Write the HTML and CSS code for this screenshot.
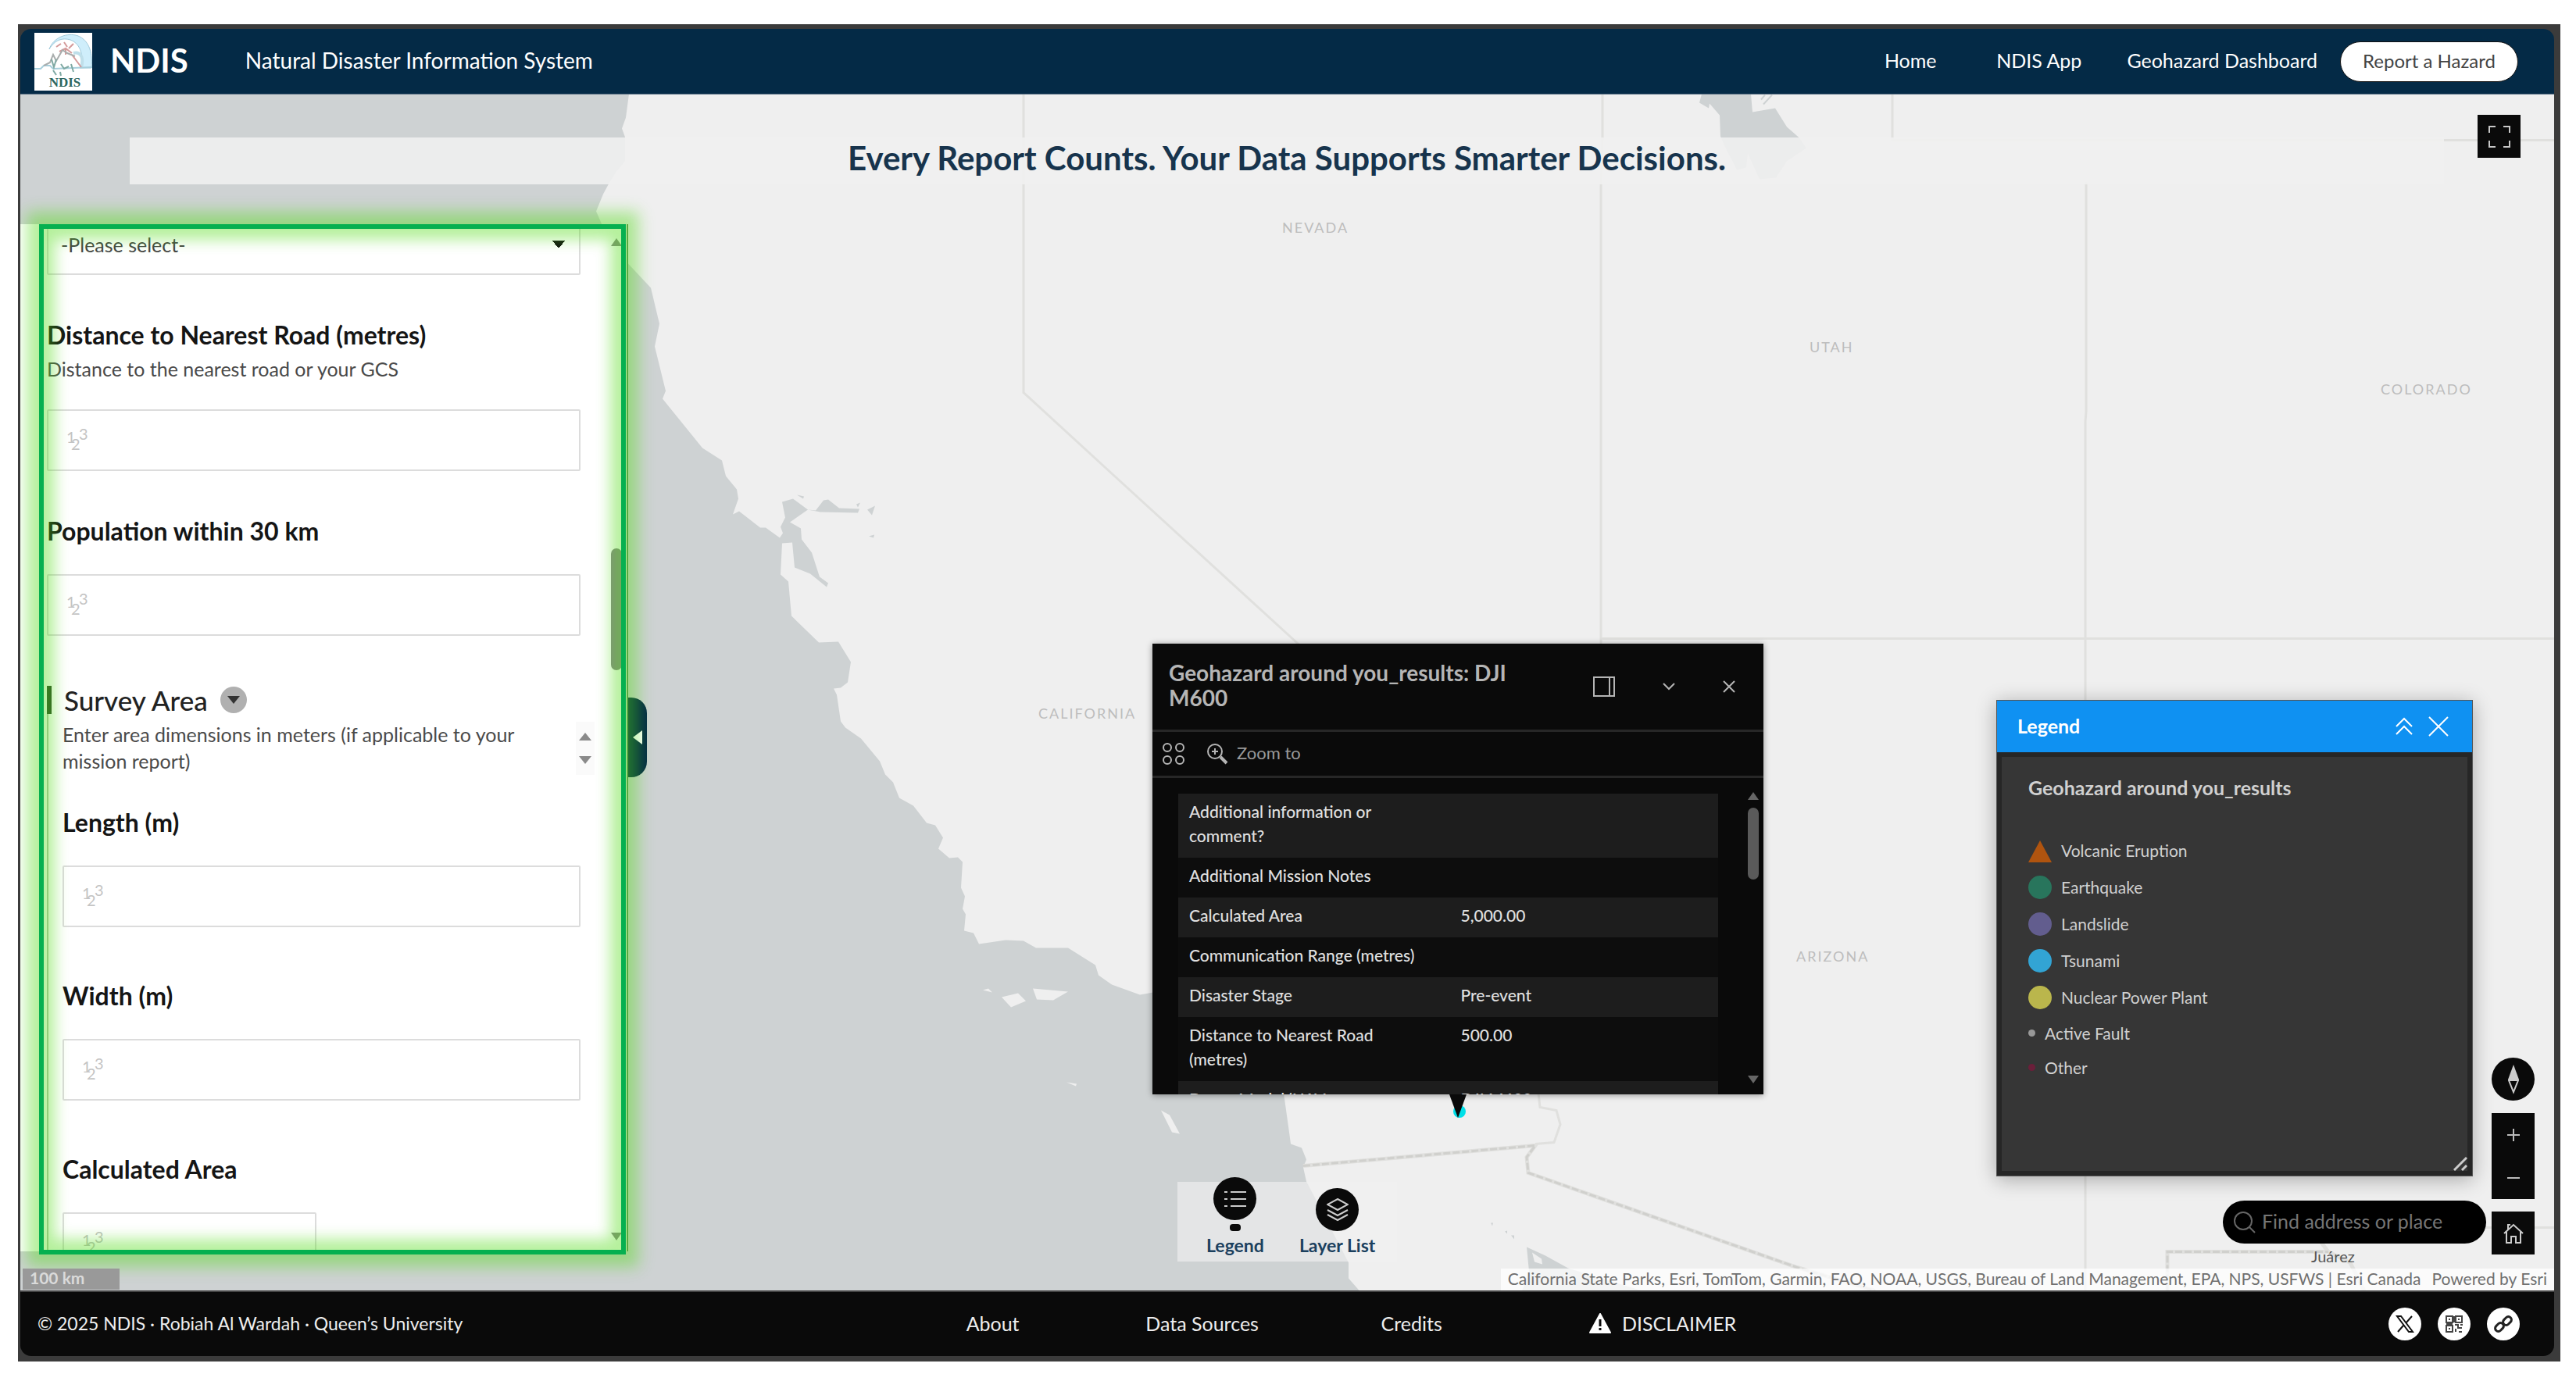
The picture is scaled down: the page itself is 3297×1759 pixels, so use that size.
FILE: index.html
```
<!DOCTYPE html>
<html lang="en">
<head>
    <meta charset="UTF-8">
    <meta name="viewport" content="width=device-width, initial-scale=1.0">
    <title>NDIS - Natural Disaster Information System</title>
    <link rel="stylesheet" href="styles.css">
</head>
<body>
    <div class="app">
        <header class="header">
            <svg class="logo" viewBox="0 0 74 74" aria-label="NDIS logo">
                <rect width="74" height="74" fill="#fff"/>
                <path d="M19 21 C24 6 42 -1 56 4 C68 9 75 22 73 45 L58 45 C64 32 60 14 46 9 C36 6 26 9 19 21Z" fill="#cfeefb" stroke="#9fc9da"/>
                <path d="M50 26 C58 24 64 30 60 44" fill="none" stroke="#bfdfea" stroke-width="4"/>
                <path d="M0 46 L8 46 L12 42 L20 42 L24 46 L74 44" fill="none" stroke="#a7cfdc" stroke-width="2"/>
                <path d="M28 18 L34 14 M38 12 L42 18 M50 14 L44 20 M32 24 L40 20 L48 26 M40 20 L40 28 M48 28 L60 44" fill="none" stroke="#d49a9a" stroke-width="2"/>
                <path d="M12 42 L20 38 L24 28 L28 36 L36 22 L42 26 L52 30" fill="none" stroke="#a9adad" stroke-width="2"/>
                <path d="M22 34 L25 44 L28 34 M24 48 L28 54 M34 40 L38 46 L44 43 M33 50 L34 55 M47 40 L50 50" fill="none" stroke="#7fa9a3" stroke-width="2"/>
                <text x="39" y="69" class="logo-text" text-anchor="middle">NDIS</text>
            </svg>
            <h1 class="brand">NDIS</h1>
            <p class="tagline">Natural Disaster Information System</p>
            <nav class="nav">
                <a href="#">Home</a>
                <a href="#">NDIS App</a>
                <a href="#">Geohazard Dashboard</a>
            </nav>
            <button class="report">Report a Hazard</button>
        </header>

        <main class="map">
            <svg class="basemap" viewBox="26 121 3243 1532" preserveAspectRatio="xMidYMid slice" aria-hidden="true">
                <rect x="26" y="121" width="3243" height="1532" fill="#efefef"/>
                <!-- ocean -->
                <path fill="#ced2d3" d="M26 121 L805 121 L801 151 L796 165 L800 176 L800 207 L789 220 L779 236 L772 249 L763 271 L770 287 L803 337 L833 369 L844 415 L838 444 L852 501 L848 511 L899 574 L924 590 L929 610 L943 627 L945 639 L938 659 L946 655 L973 676 L980 676 L998 689 L1002 683 L999 675 L1005 663 L1001 643 L1015 639 L1034 653 L1011 669 L1025 677 L1026 691 L1039 708 L1049 739 L1060 747 L1058 752 L1037 735 L1017 727 L1014 695 L1001 696 L999 736 L1009 745 L1013 789 L1048 823 L1073 822 L1089 848 L1085 874 L1076 881 L1067 882 L1071 890 L1076 924 L1082 932 L1102 946 L1126 975 L1133 992 L1143 1002 L1151 1022 L1169 1032 L1186 1054 L1197 1057 L1207 1073 L1201 1087 L1215 1099 L1226 1098 L1232 1104 L1230 1137 L1235 1148 L1232 1164 L1236 1171 L1234 1192 L1246 1195 L1253 1209 L1287 1204 L1310 1205 L1326 1214 L1367 1214 L1402 1236 L1406 1249 L1423 1261 L1459 1274 L1476 1271 L1560 1300 L1643 1400 L1650 1450 L1652 1465 L1666 1470 L1672 1485 L1668 1495 L1672 1513 L1682 1532 L1726 1617 L1726 1637 L1740 1653 L26 1653Z"/>
                <path fill="#ced2d3" d="M1034 653 L1044 654 L1054 641 L1060 640 L1074 651 L1100 652 L1098 657 L1050 656Z M1020 634 L1029 636 L1028 639Z M1110 653 L1120 648 L1116 660Z M1112 687 L1119 685 L1118 689Z M1096 646 L1101 644 L1098 650Z M1908 1566 L1911 1566 L1910 1570Z M1926 1577 L1929 1576 L1929 1580Z M1934 1582 L1938 1582 L1938 1587Z"/>
                <!-- gulf and lakes -->
                <path fill="#ced2d3" d="M1954 1597 L1978 1608 L2007 1624 L2102 1653 L1948 1653 L1957 1628Z"/>
                <path fill="#efefef" d="M1961 1604 L1973 1612 L1974 1619 L1964 1616Z"/>
                <path fill="#ced2d3" d="M2178 121 L2175 132 L2187 139 L2188 133 L2201 148 L2202 175 L2207 187 L2223 218 L2235 215 L2237 197 L2252 230 L2273 228 L2287 207 L2312 190 L2303 177 L2287 163 L2272 139 L2243 144 L2241 121Z"/>
                <path fill="none" stroke="#ced2d3" stroke-width="2" d="M2254 128 L2259 122 M2257 134 L2268 122"/>
                <!-- channel islands -->
                <path fill="#efefef" d="M1282 1277 L1303 1272 L1313 1282 L1294 1290Z M1322 1266 L1367 1270 L1348 1281 L1327 1280Z M1258 1268 L1265 1266 L1270 1271Z M1365 1386 L1378 1388 L1377 1391Z M1486 1422 L1497 1428 L1510 1452 L1500 1450Z"/>
                <g fill="none" stroke="#e0e0de" stroke-width="3">
                    <path d="M1310 121 V503 L1420 604 L1700 860"/>
                    <path d="M2051 121 V180 L2049 240 V830"/>
                    <path d="M2422 121 V180 H3269"/>
                    <path d="M2670 234 V528 L2669 540 V1653"/>
                    <path d="M2049 818 H3269"/>
                    <path d="M1969 1400 L1971 1418 L1992 1422 L1997 1440 L1989 1463 L1965 1465"/>
                    <path d="M2960 1572 H3269"/>
                </g>
                <g fill="none" stroke="#e0e0de" stroke-width="5">
                    <path d="M1668 1493 L1965 1467 L1954 1482 L1956 1502 L2300 1623 L2400 1653"/>
                    <path d="M2774 1653 V1603 H2980 L2970 1590"/>
                    <path d="M2980 1603 L3008 1617 L3026 1653"/>
                </g>
                <g fill="none" stroke="#d0d0cd" stroke-width="3" stroke-dasharray="9 3">
                    <path d="M1668 1493 L1965 1467 L1954 1482 L1956 1502 L2300 1623 L2400 1653"/>
                    <path d="M2774 1653 V1603 H2980"/>
                </g>
                <g class="state">
                    <text x="1641" y="298">NEVADA</text>
                    <text x="2316" y="451">UTAH</text>
                    <text x="3047" y="505">COLORADO</text>
                    <text x="1329" y="920">CALIFORNIA</text>
                    <text x="2299" y="1231">ARIZONA</text>
                </g>
                <text class="city" x="2958" y="1616">Juárez</text>
            </svg>

            <div class="banner"><h2>Every Report Counts. Your Data Supports Smarter Decisions.</h2></div>

            <button class="square fullscreen" aria-label="Full screen">
                <svg width="30" height="30" viewBox="0 0 30 30" fill="none" stroke="#c8c8c8" stroke-width="2"><path d="M2 10 V2 H10 M20 2 H28 V10 M28 20 V28 H20 M10 28 H2 V20"/></svg>
            </button>

            <section class="panel">
                <form class="survey">
                    <select class="box" aria-label="Please select"><option>-Please select-</option></select>

                    <label class="label" for="road">Distance to Nearest Road (metres)</label>
                    <p class="hint">Distance to the nearest road or your GCS</p>
                    <div class="number">
                        <svg class="digits" viewBox="0 0 28 34"><text x="0" y="21">1</text><text x="6" y="30">2</text><text x="16" y="17">3</text></svg>
                        <input class="box" id="road" type="text">
                    </div>

                    <label class="label" for="population">Population within 30 km</label>
                    <div class="number">
                        <svg class="digits" viewBox="0 0 28 34"><text x="0" y="21">1</text><text x="6" y="30">2</text><text x="16" y="17">3</text></svg>
                        <input class="box" id="population" type="text">
                    </div>

                    <fieldset class="group">
                        <div class="group-title">
                            <h3>Survey Area</h3>
                            <button type="button" class="collapse" aria-label="Collapse">
                                <svg width="16" height="10" viewBox="0 0 16 10"><path d="M0 0 H16 L8 10Z" fill="#333"/></svg>
                            </button>
                        </div>
                        <div class="group-body">
                            <div class="group-hint">
                                <p class="hint">Enter area dimensions in meters (if applicable to your mission report)</p>
                                <svg width="24" height="68" viewBox="0 0 24 68"><rect width="24" height="68" fill="#fafafa"/><path d="M4 24 H20 L12 14Z M4 44 H20 L12 54Z" fill="#8a8a8a"/></svg>
                            </div>

                            <label class="label" for="length">Length (m)</label>
                            <div class="number">
                                <svg class="digits" viewBox="0 0 28 34"><text x="0" y="21">1</text><text x="6" y="30">2</text><text x="16" y="17">3</text></svg>
                                <input class="box" id="length" type="text">
                            </div>

                            <label class="label" for="width">Width (m)</label>
                            <div class="number">
                                <svg class="digits" viewBox="0 0 28 34"><text x="0" y="21">1</text><text x="6" y="30">2</text><text x="16" y="17">3</text></svg>
                                <input class="box" id="width" type="text">
                            </div>

                            <label class="label" for="area">Calculated Area</label>
                            <div class="number half">
                                <svg class="digits" viewBox="0 0 28 34"><text x="0" y="21">1</text><text x="6" y="30">2</text><text x="16" y="17">3</text></svg>
                                <input class="box" id="area" type="text">
                            </div>
                        </div>
                    </fieldset>
                </form>
                <div class="scrollbar">
                    <svg width="14" height="10" viewBox="0 0 14 10"><path d="M0 10 H14 L7 0Z" fill="#8a8a8a"/></svg>
                    <span class="thumb"></span>
                    <svg width="14" height="10" viewBox="0 0 14 10"><path d="M0 0 H14 L7 10Z" fill="#8a8a8a"/></svg>
                </div>
                <button class="drawer" aria-label="Hide panel">
                    <svg width="12" height="18" viewBox="0 0 12 18"><path d="M12 0 V18 L0 9Z" fill="#fff"/></svg>
                </button>
                <div class="highlight"></div>
            </section>

            <section class="popup">
                <header class="popup-head">
                    <h3>Geohazard around you_results: DJI M600</h3>
                    <button aria-label="Dock">
                        <svg width="28" height="26" viewBox="0 0 28 26" fill="none" stroke="#b5b5b5" stroke-width="2"><rect x="1" y="1" width="26" height="24"/><path d="M21 1 V25"/></svg>
                    </button>
                    <button aria-label="Collapse">
                        <svg width="16" height="10" viewBox="0 0 16 10" fill="none" stroke="#b5b5b5" stroke-width="2"><path d="M1 1 L8 8 L15 1"/></svg>
                    </button>
                    <button aria-label="Close">
                        <svg width="16" height="16" viewBox="0 0 16 16" fill="none" stroke="#b5b5b5" stroke-width="2"><path d="M1 1 L15 15 M15 1 L1 15"/></svg>
                    </button>
                </header>
                <div class="popup-tools">
                    <button aria-label="Select feature">
                        <svg width="30" height="30" viewBox="0 0 30 30" fill="none" stroke="#b5b5b5" stroke-width="2"><circle cx="7" cy="7" r="5"/><circle cx="23" cy="7" r="5"/><circle cx="7" cy="23" r="5"/><circle cx="23" cy="23" r="5"/></svg>
                    </button>
                    <button>
                        <svg width="28" height="28" viewBox="0 0 28 28" fill="none" stroke="#b5b5b5" stroke-width="2"><circle cx="11" cy="11" r="9"/><path d="M7 11 H15 M11 7 V15"/><path d="M18 18 L26 26" stroke-width="4"/></svg>
                        <span>Zoom to</span>
                    </button>
                </div>
                <div class="popup-body">
                    <table>
                        <tbody>
                            <tr><th>Additional information or comment?</th><td></td></tr>
                            <tr><th>Additional Mission Notes</th><td></td></tr>
                            <tr><th>Calculated Area</th><td>5,000.00</td></tr>
                            <tr><th>Communication Range (metres)</th><td></td></tr>
                            <tr><th>Disaster Stage</th><td>Pre-event</td></tr>
                            <tr><th>Distance to Nearest Road (metres)</th><td>500.00</td></tr>
                            <tr><th>Drone Model/UAV</th><td>DJI M600</td></tr>
                        </tbody>
                    </table>
                    <div class="scrollbar">
                        <svg width="14" height="10" viewBox="0 0 14 10"><path d="M0 10 H14 L7 0Z" fill="#666"/></svg>
                        <span class="thumb"></span>
                        <svg width="14" height="10" viewBox="0 0 14 10"><path d="M0 0 H14 L7 10Z" fill="#666"/></svg>
                    </div>
                </div>
                <svg class="pointer" width="30" height="34" viewBox="0 0 30 34"><circle cx="17" cy="22" r="8" fill="#00e0e8"/><path d="M4 0 H26 L15 30Z" fill="#0a0a0a"/></svg>
            </section>

            <section class="legend">
                <header class="legend-head">
                    <h3>Legend</h3>
                    <button aria-label="Collapse">
                        <svg width="22" height="24" viewBox="0 0 22 24" fill="none" stroke="#fff" stroke-width="2"><path d="M1 12 L11 2 L21 12 M1 22 L11 12 L21 22"/></svg>
                    </button>
                    <button aria-label="Close">
                        <svg width="26" height="26" viewBox="0 0 26 26" fill="none" stroke="#fff" stroke-width="2"><path d="M1 1 L25 25 M25 1 L1 25"/></svg>
                    </button>
                </header>
                <div class="legend-body">
                    <h4>Geohazard around you_results</h4>
                    <ul>
                        <li><svg width="30" height="30" viewBox="0 0 30 30"><path d="M15 2 L30 30 H0Z" fill="#b0540f"/></svg>Volcanic Eruption</li>
                        <li><i class="dot earthquake"></i>Earthquake</li>
                        <li><i class="dot landslide"></i>Landslide</li>
                        <li><i class="dot tsunami"></i>Tsunami</li>
                        <li><i class="dot nuclear"></i>Nuclear Power Plant</li>
                        <li class="small"><i class="dot fault"></i>Active Fault</li>
                        <li class="small"><i class="dot other"></i>Other</li>
                    </ul>
                </div>
                <svg class="resize" width="18" height="20" viewBox="0 0 18 20"><path d="M1 19 L17 3 M11 19 L17 13" stroke="#ccc" stroke-width="3"/></svg>
            </section>

            <div class="widgets">
                <div class="widget">
                    <button aria-label="Legend">
                        <svg width="28" height="24" viewBox="0 0 28 24" stroke="#ccc" stroke-width="2"><path d="M0 3 H4 M8 3 H28 M0 12 H4 M8 12 H28 M0 21 H4 M8 21 H28"/></svg>
                    </button>
                    <span class="mark"></span>
                    <span>Legend</span>
                </div>
                <div class="widget">
                    <button aria-label="Layer List">
                        <svg width="28" height="30" viewBox="0 0 28 30" fill="none" stroke="#ccc" stroke-width="2"><path d="M14 1 L27 8 L14 15 L1 8Z M1 15 L14 22 L27 15 M1 21 L14 28 L27 21"/></svg>
                    </button>
                    <span>Layer List</span>
                </div>
            </div>

            <div class="controls">
                <button class="square round" aria-label="Compass">
                    <svg width="14" height="38" viewBox="0 0 14 38"><path d="M7 0 L14 19 H0Z" fill="#ccc"/><path d="M1 20 H13 L7 35Z" fill="none" stroke="#ccc" stroke-width="2"/></svg>
                </button>
                <div class="zoom">
                    <button class="square" aria-label="Zoom in"><svg width="16" height="16" viewBox="0 0 16 16" stroke="#bbb" stroke-width="2"><path d="M0 8 H16 M8 0 V16"/></svg></button>
                    <button class="square" aria-label="Zoom out"><svg width="16" height="16" viewBox="0 0 16 16" stroke="#bbb" stroke-width="2"><path d="M0 8 H16"/></svg></button>
                </div>
                <button class="square" aria-label="Home">
                    <svg width="26" height="26" viewBox="0 0 26 26" fill="none" stroke="#ccc" stroke-width="2"><path d="M1 13 L13 2 L25 13 M4 11 V25 H10 V17 H16 V25 H22 V11 M6 8 V2 H9"/></svg>
                </button>
            </div>

            <div class="search">
                <svg width="28" height="28" viewBox="0 0 28 28" fill="none" stroke="#666" stroke-width="2"><circle cx="12" cy="12" r="11"/><path d="M20 20 L27 27"/></svg>
                <input type="text" placeholder="Find address or place" aria-label="Find address or place">
            </div>

            <div class="scale">100 km</div>
            <div class="attribution">
                <span>California State Parks, Esri, TomTom, Garmin, FAO, NOAA, USGS, Bureau of Land Management, EPA, NPS, USFWS | Esri Canada</span>
                <a href="#">Powered by Esri</a>
            </div>
        </main>

        <footer class="footer">
            <p>© 2025 NDIS · Robiah Al Wardah · Queen’s University</p>
            <nav class="footer-nav">
                <a href="#">About</a>
                <a href="#">Data Sources</a>
                <a href="#">Credits</a>
                <a href="#" class="disclaimer">
                    <svg width="28" height="26" viewBox="0 0 28 26"><path d="M14 1 L27 25 H1Z" fill="#fff" stroke="#fff" stroke-width="2" stroke-linejoin="round"/><path d="M14 8 V17 M14 19 V22" stroke="#0a0a0a" stroke-width="3"/></svg>
                    DISCLAIMER
                </a>
            </nav>
            <div class="social">
                <a href="#" aria-label="X"><svg width="24" height="24" viewBox="0 0 24 24" fill="none" stroke="#111" stroke-width="2"><path d="M2 2 H7 L22 22 H17Z M21 2 L13 11 M10 14 L3 22"/></svg></a>
                <a href="#" aria-label="QR code"><svg width="24" height="24" viewBox="0 0 24 24" fill="none" stroke="#444" stroke-width="2"><rect x="2" y="2" width="8" height="8"/><rect x="14" y="2" width="8" height="8"/><rect x="2" y="14" width="8" height="8"/><path d="M5 6 H7 M17 6 H19 M5 18 H7 M12 2 V10 M2 12 H10 M13 13 H17 V17 H22 M14 22 V18 M18 22 H22 M20 13 H23"/></svg></a>
                <a href="#" aria-label="Copy link"><svg width="24" height="24" viewBox="0 0 24 24" fill="none" stroke="#222" stroke-width="3"><rect x="1" y="12" width="12" height="8" rx="4" transform="rotate(-45 7 16)"/><rect x="11" y="4" width="12" height="8" rx="4" transform="rotate(-45 17 8)"/></svg></a>
            </div>
        </footer>
    </div>
</body>
</html>
```
FILE: styles.css
```
* {
    box-sizing: border-box;
}
body {
    margin: 0;
    padding: 31px 20px 16px 23px;
    height: 100vh;
    background-color: #fff;
    font-family: Lato, "Open Sans", sans-serif;
    font-size: 25px;
}
h1, h2, h3, h4, p, ul {
    margin: 0;
    padding: 0;
}
button, input, select {
    font: inherit;
    color: inherit;
}
button {
    border: 0;
    padding: 0;
    background: none;
    cursor: pointer;
}
a {
    color: inherit;
    text-decoration: none;
}
svg {
    display: block;
    flex-shrink: 0;
}
.app {
    height: 100%;
    display: flex;
    flex-direction: column;
    border: 3px solid #3b3b3b;
    border-width: 6px 8px 7px 3px;
    background-color: #3b3b3b;
}

/* header */
.header {
    display: flex;
    align-items: center;
    height: 84px;
    padding: 0 46px 0 18px;
    background-color: #042a46;
    color: #fff;
    border-radius: 14px 14px 0 0;
    border-bottom: 1px solid #5c7285;
}
.logo {
    width: 74px;
    height: 74px;
}
.logo-text {
    font: bold 17px "Liberation Serif", serif;
    fill: #2c665f;
}
.brand {
    margin-left: 23px;
    padding-bottom: 3px;
    font-size: 42px;
    font-weight: 700;
}
.tagline {
    margin-left: 73px;
    padding-bottom: 3px;
    font-size: 28px;
}
.nav {
    display: flex;
    margin-left: auto;
    padding-bottom: 3px;
}
.nav a {
    min-width: 162px;
    padding: 0 29px;
    text-align: center;
}
.report {
    height: 52px;
    padding: 0 28px 3px;
    border: 1px solid #111;
    border-radius: 26px;
    background-color: #fff;
    color: #444;
    font-size: 24px;
}

/* map */
.map {
    position: relative;
    flex: 1;
    min-height: 0;
    overflow: hidden;
    background-color: #efefef;
}
.basemap {
    width: 100%;
    height: 100%;
}
.state {
    font-size: 18px;
    letter-spacing: 2px;
    fill: #bdbdbd;
}
.city {
    font-size: 20px;
    fill: #555;
}
.banner {
    position: absolute;
    top: 55px;
    left: 140px;
    right: 141px;
    height: 60px;
    line-height: 52px;
    text-align: center;
    background-color: rgba(240, 240, 240, 0.88);
    color: #17344d;
}
.banner h2 {
    font-size: 42px;
    font-weight: 700;
}
.square {
    display: flex;
    align-items: center;
    justify-content: center;
    width: 55px;
    height: 55px;
    background-color: #0a0a0a;
}
.round {
    border-radius: 50%;
}
.fullscreen {
    position: absolute;
    top: 26px;
    right: 43px;
}

/* survey panel */
.panel {
    position: absolute;
    top: 166px;
    left: 0;
    bottom: 50px;
    width: 778px;
    background-color: #fff;
    border-right: 2px solid #5f8a5c;
}
.survey {
    height: 100%;
    padding: 0 59px 0 34px;
    overflow: hidden;
}
.box {
    display: block;
    width: 100%;
    height: 79px;
    padding: 0 16px;
    border: 2px solid #dcdcdc;
    border-radius: 2px;
    background-color: #fff;
}
select.box {
    margin-top: -14px;
    appearance: none;
    color: #444;
    background-image: conic-gradient(from -40deg at 50% 100%, #111 80deg, transparent 0);
    background-size: 18px 10px;
    background-repeat: no-repeat;
    background-position: right 17px center;
}
.label {
    display: block;
    margin-top: 57px;
    padding-bottom: 1px;
    line-height: 40px;
    font-size: 32px;
    font-weight: 700;
    color: #151515;
}
.hint {
    margin-top: 5px;
    padding-bottom: 1px;
    line-height: 34px;
    color: #4a4a4a;
}
.number {
    position: relative;
    margin-top: 34px;
}
.half {
    width: 325px;
}
.digits {
    position: absolute;
    top: 22px;
    left: 25px;
    width: 28px;
    height: 34px;
    overflow: visible;
    font-size: 20px;
    fill: #c4c4c4;
}
.group {
    margin: 64px 0 0;
    padding: 0;
    border: 0;
}
.group-title {
    display: flex;
    align-items: center;
    gap: 16px;
    line-height: 36px;
    border-left: 6px solid #2d4a2a;
    padding-left: 16px;
}
.group-title h3 {
    font-size: 35px;
    font-weight: 500;
    color: #222;
}
.collapse {
    display: flex;
    align-items: center;
    justify-content: center;
    width: 34px;
    height: 34px;
    border-radius: 50%;
    background-color: #b0b0b0;
}
.group-body {
    padding-left: 18px;
    border-left: 2px solid #b5c5b0;
}
.group-hint {
    display: flex;
    align-items: flex-end;
    justify-content: space-between;
    margin-right: -18px;
}
.group-hint .hint {
    width: 600px;
    margin-top: 9px;
}
.group-hint + .label {
    margin-top: 41px;
}
.group-body .number + .label {
    margin-top: 68px;
}
.scrollbar {
    position: absolute;
    top: 0;
    right: 6px;
    bottom: 0;
    display: flex;
    flex-direction: column;
    justify-content: space-between;
    padding: 18px 0 14px;
}
.thumb {
    width: 14px;
    height: 156px;
    margin: 387px 0 auto;
    border-radius: 7px;
    background-color: #8a8a8a;
}
.drawer {
    position: absolute;
    top: 606px;
    right: -26px;
    width: 24px;
    height: 102px;
    padding-left: 6px;
    border-radius: 0 20px 20px 0;
    background-color: #042a46;
}
/* green focus frame with glow on both sides */
.highlight {
    position: absolute;
    top: 0;
    left: 24px;
    right: 1px;
    bottom: -4px;
    border: 6px solid #06b050;
    pointer-events: none;
    box-shadow: 0 0 18px 16px rgba(78, 219, 20, 0.42), inset 0 0 18px 14px rgba(78, 219, 20, 0.42);
}

/* popup */
.popup {
    position: absolute;
    top: 703px;
    left: 1449px;
    width: 782px;
    height: 577px;
    display: flex;
    flex-direction: column;
    background-color: #0a0a0a;
    color: #b5b5b5;
    box-shadow: 0 1px 8px rgba(0, 0, 0, 0.4);
}
.popup-head {
    display: flex;
    align-items: center;
    gap: 61px;
    height: 113px;
    padding: 0 0 0 21px;
    border-bottom: 3px solid #272727;
}
.popup-head h3 {
    width: 482px;
    height: 68px;
    line-height: 32px;
    font-size: 28px;
    font-weight: 700;
}
.popup-tools {
    display: flex;
    align-items: center;
    gap: 27px;
    height: 59px;
    padding: 0 12px;
    border-bottom: 3px solid #272727;
}
.popup-tools button {
    display: flex;
    align-items: center;
    gap: 11px;
    font-size: 22px;
    color: #999;
}
.popup-tools span {
    padding-bottom: 4px;
}
.popup-body {
    position: relative;
    flex: 1;
    min-height: 0;
    padding: 20px 58px 0 33px;
    overflow: hidden;
}
.popup-body table {
    width: 100%;
    table-layout: fixed;
    border-collapse: collapse;
}
.popup-body th, .popup-body td {
    padding: 7px 30px 13px 14px;
    line-height: 31px;
    text-align: left;
    vertical-align: top;
    font-size: 21px;
    font-weight: 500;
    color: #e0e0e0;
}
.popup-body td {
    padding-left: 16px;
}
.popup-body tr {
    background-color: #0d0d0d;
}
.popup-body tr:nth-child(odd) {
    background-color: #1d1d1d;
}
.popup-body .thumb {
    height: 92px;
    margin: 10px 0 auto;
    background-color: #5a5a5a;
}
.pointer {
    position: absolute;
    top: 100%;
    left: 376px;
}

/* legend */
.legend {
    position: absolute;
    right: 104px;
    bottom: 146px;
    width: 610px;
    height: 610px;
    background-color: #363636;
    border: 1px solid #555;
    color: #d0d0d0;
    box-shadow: 0 4px 24px rgba(0, 0, 0, 0.3);
}
.legend-head {
    display: flex;
    align-items: center;
    gap: 20px;
    height: 66px;
    padding: 0 30px 0 26px;
    background-color: #0f91f2;
    color: #fff;
}
.legend-head h3 {
    margin-right: auto;
    padding-bottom: 2px;
    font-size: 25px;
}
.legend-body {
    height: 542px;
    padding: 25px 34px;
    border: 6px solid #262626;
}
.legend h4 {
    line-height: 28px;
    font-size: 25px;
    margin-bottom: 43px;
}
.legend ul {
    list-style: none;
}
.legend li {
    display: flex;
    align-items: center;
    gap: 12px;
    height: 47px;
    font-size: 21px;
}
.legend .small {
    height: 44px;
}
.dot {
    width: 30px;
    height: 30px;
    border-radius: 50%;
}
.earthquake { background-color: #28755c; }
.landslide { background-color: #625d8e; }
.tsunami { background-color: #32a4d4; }
.nuclear { background-color: #bab64c; }
.fault, .other {
    width: 9px;
    height: 9px;
}
.fault { background-color: #999; }
.other { background-color: #6b1f3a; }
.resize {
    position: absolute;
    right: 6px;
    bottom: 6px;
}

/* bottom widgets */
.widgets {
    position: absolute;
    left: 1481px;
    bottom: 37px;
    display: flex;
    gap: 45px;
    height: 102px;
    padding: 0 28px 8px 37px;
    align-items: flex-end;
    background-color: rgba(240, 240, 240, 0.65);
    color: #1b405e;
    font-size: 23px;
    line-height: 26px;
    font-weight: 700;
    white-space: nowrap;
}
.widget {
    display: flex;
    flex-direction: column;
    align-items: center;
    gap: 5px;
}
.widget button {
    display: flex;
    align-items: center;
    justify-content: center;
    width: 55px;
    height: 55px;
    border-radius: 50%;
    background-color: #0a0a0a;
}
.mark {
    width: 14px;
    height: 9px;
    border-radius: 4px;
    background-color: #0a0a0a;
}

/* map controls */
.controls {
    position: absolute;
    right: 25px;
    bottom: 46px;
    display: flex;
    flex-direction: column;
    gap: 16px;
}
.search {
    position: absolute;
    right: 87px;
    bottom: 60px;
    display: flex;
    align-items: center;
    gap: 8px;
    width: 337px;
    height: 55px;
    padding: 0 14px;
    border-radius: 28px;
    background-color: #000;
}
.search input {
    width: 100%;
    min-width: 0;
    padding: 0 0 3px;
    border: 0;
    background: none;
    color: #ccc;
}
.search input::placeholder {
    color: #757575;
    opacity: 1;
}
.scale {
    position: absolute;
    left: 3px;
    bottom: 1px;
    width: 124px;
    height: 27px;
    padding-left: 9px;
    line-height: 24px;
    background-color: #999;
    color: #dadada;
    font-size: 21px;
    font-weight: 700;
}
.attribution {
    position: absolute;
    right: 0;
    bottom: 0;
    display: flex;
    gap: 14px;
    height: 28px;
    line-height: 25px;
    padding: 0 9px;
    background-color: rgba(255, 255, 255, 0.75);
    color: #707070;
    font-size: 21px;
    white-space: nowrap;
}

/* footer */
.footer {
    display: grid;
    grid-template-columns: 34% auto 1fr;
    align-items: center;
    height: 84px;
    border-top: 2px solid #444;
    border-radius: 0 0 14px 14px;
    background-color: #0a0a0a;
    color: #eee;
}
.footer p {
    padding: 0 0 3px 22px;
    font-size: 23px;
}
.footer-nav {
    display: flex;
    padding: 0 0 3px 8px;
}
.footer-nav a {
    width: 268px;
    text-align: center;
}
.footer-nav .disclaimer {
    display: flex;
    align-items: center;
    justify-content: center;
    gap: 14px;
    width: 375px;
}
.social {
    display: flex;
    justify-content: flex-end;
    gap: 21px;
    padding-right: 44px;
}
.social a {
    display: flex;
    align-items: center;
    justify-content: center;
    width: 42px;
    height: 42px;
    border-radius: 50%;
    background-color: #fff;
}
```
